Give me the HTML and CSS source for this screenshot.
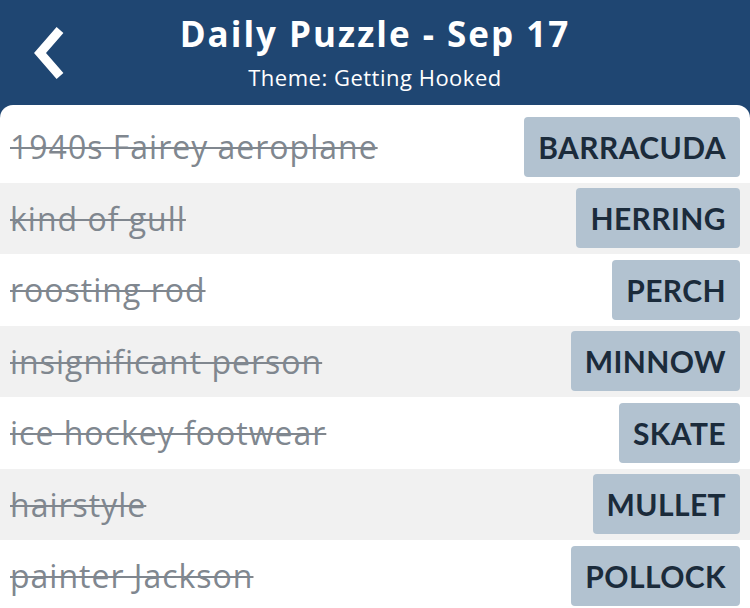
FILE: index.html
```html
<!DOCTYPE html>
<html>
<head>
<meta charset="utf-8">
<link rel="stylesheet" href="styles.css">
</head>
<body>
<div class="app">
  <header class="header">
    <div class="back">
      <svg width="40" height="56" viewBox="0 0 40 56"><polyline points="29,5 9,28 29,51" fill="none" stroke="#fff" stroke-width="9" stroke-linejoin="miter" stroke-linecap="butt"/></svg>
    </div>
    <div class="titles">
      <div class="title">Daily Puzzle - Sep 17</div>
      <div class="subtitle">Theme: Getting Hooked</div>
    </div>
    <div></div>
  </header>
  <main class="panel">
    <div class="row"><span class="clue">1940s Fairey aeroplane</span><span class="answer">BARRACUDA</span></div>
    <div class="row alt"><span class="clue">kind of gull</span><span class="answer">HERRING</span></div>
    <div class="row"><span class="clue">roosting rod</span><span class="answer">PERCH</span></div>
    <div class="row alt"><span class="clue">insignificant person</span><span class="answer">MINNOW</span></div>
    <div class="row"><span class="clue">ice hockey footwear</span><span class="answer">SKATE</span></div>
    <div class="row alt"><span class="clue">hairstyle</span><span class="answer">MULLET</span></div>
    <div class="row"><span class="clue">painter Jackson</span><span class="answer">POLLOCK</span></div>
  </main>
</div>
</body>
</html>
```
FILE: styles.css
```css
html, body {
  margin: 0;
  padding: 0;
  background: #1f4672;
  overflow: hidden;
}
.app {
  width: 750px;
  height: 608px;
  display: flex;
  flex-direction: column;
  font-family: "Open Sans", Lato, sans-serif;
}
.header {
  height: 105px;
  display: grid;
  grid-template-columns: 1fr auto 1fr;
  align-items: start;
  color: #fff;
}
.back {
  padding: 25px 0 0 31px;
}
.titles {
  display: flex;
  flex-direction: column;
  align-items: center;
  padding-top: 11px;
}
.title {
  font-size: 35px;
  font-weight: 700;
  line-height: 46px;
  letter-spacing: 2px;
}
.subtitle {
  font-size: 22px;
  line-height: 28px;
  margin-top: 6px;
  letter-spacing: 0.5px;
}
.panel {
  flex: 1;
  background: #fff;
  border-radius: 13px 13px 0 0;
  padding-top: 6px;
  overflow: hidden;
}
.row {
  height: 71.5px;
  display: flex;
  align-items: center;
  justify-content: space-between;
  padding: 0 10px;
  box-sizing: border-box;
}
.row.alt {
  background: #f1f1f1;
}
.clue {
  font-size: 32px;
  color: #80878f;
  text-decoration: line-through;
  text-decoration-thickness: 1.5px;
  letter-spacing: 1px;
}
.answer {
  background: #b2c2d0;
  color: #1b2b3b;
  font-family: Lato, sans-serif;
  font-size: 30px;
  font-weight: 700;
  height: 60px;
  line-height: 60px;
  padding: 0 14px;
  border-radius: 4px;
  letter-spacing: 0.4px;
}
```
